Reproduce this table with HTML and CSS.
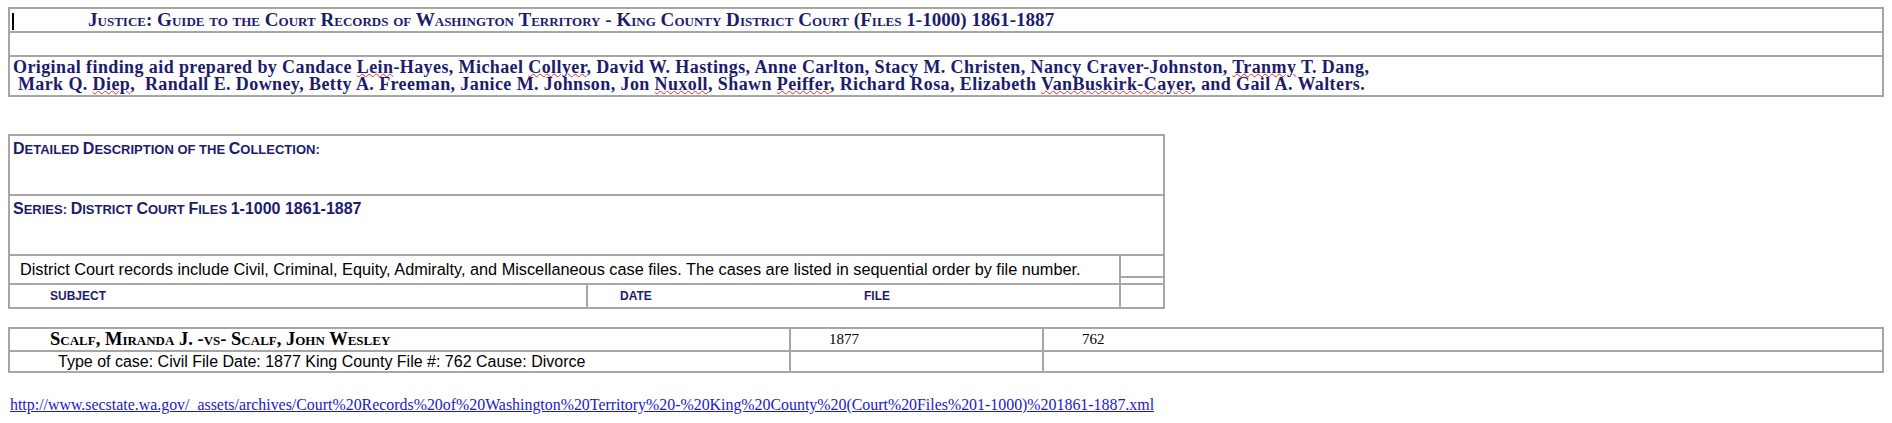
FILE: index.html
```html
<!DOCTYPE html>
<html lang="en">
<head>
  <meta charset="UTF-8">
  <title>Justice: Guide to the Court Records of Washington Territory</title>
  <link rel="stylesheet" href="styles.css">
</head>
<body>
  <!-- Guide header -->
  <table class="grid intro">
    <tr>
      <td class="title"><span class="caret"></span>Justice: Guide to the Court Records of Washington Territory - King County District Court (Files 1-1000) 1861-1887</td>
    </tr>
    <tr>
      <td class="blank"></td>
    </tr>
    <tr>
      <td class="credits">Original finding aid prepared by Candace <span class="typo">Lein</span>-Hayes, Michael <span class="typo">Collyer</span>, David W. Hastings, Anne Carlton, Stacy M. Christen, Nancy Craver-Johnston, <span class="typo">Tranmy</span> T. Dang,<br>&nbsp;Mark Q. <span class="typo">Diep</span>,&nbsp; Randall E. Downey, Betty A. Freeman, Janice M. Johnson, Jon <span class="typo">Nuxoll</span>, Shawn <span class="typo">Peiffer</span>, Richard Rosa, Elizabeth <span class="typo">VanBuskirk-Cayer</span>, and Gail A. Walters.</td>
    </tr>
  </table>

  <!-- Collection description -->
  <table class="grid collection">
    <tr>
      <td class="heading" colspan="3"><span class="init">D</span>etailed <span class="init">D</span>escription of the <span class="init">C</span>ollection:</td>
    </tr>
    <tr>
      <td class="heading" colspan="3"><span class="init">S</span>eries: <span class="init">D</span>istrict <span class="init">C</span>ourt <span class="init">F</span>iles <span class="init">1-1000 1861-1887</span></td>
    </tr>
    <tr>
      <td class="desc" colspan="2" rowspan="2">District Court records include Civil, Criminal, Equity, Admiralty, and Miscellaneous case files. The cases are listed in sequential order by file number.</td>
      <td class="side side-top"></td>
    </tr>
    <tr>
      <td class="side side-thin"></td>
    </tr>
    <tr>
      <td class="colhead subject">Subject</td>
      <td class="colhead dates"><span class="col-date">Date</span>File</td>
      <td class="side"></td>
    </tr>
  </table>

  <!-- Case listing -->
  <table class="grid cases">
    <tr>
      <td class="case-name">Scalf, Miranda J. -vs- Scalf, John Wesley</td>
      <td class="case-num case-date">1877</td>
      <td class="case-num">762</td>
    </tr>
    <tr>
      <td class="case-info">Type of case: Civil File Date: 1877 King County File #: 762 Cause: Divorce</td>
      <td></td>
      <td></td>
    </tr>
  </table>

  <p class="source"><a href="#">http://www.secstate.wa.gov/_assets/archives/Court%20Records%20of%20Washington%20Territory%20-%20King%20County%20(Court%20Files%201-1000)%201861-1887.xml</a></p>
</body>
</html>
```

FILE: styles.css
```css
/* General */
body {
  margin: 7px 8px;
  font-family: 'Liberation Serif', serif;
  color: #000;
  background: #fff;
}

/* Bordered tables */
.grid {
  border: 1px solid #a6a6a6;
  border-collapse: separate;
  border-spacing: 0;
}

.grid td {
  border: 1px solid #a6a6a6;
  padding: 0 3px;
  vertical-align: middle;
}

/* Header table */
.intro {
  width: 100%;
}

.title {
  height: 20px;
  padding-left: 2px !important;
  font-size: 19.1px;
  font-weight: bold;
  font-variant: small-caps;
  color: #1c1c6e;
  white-space: nowrap;
}

.caret {
  display: inline-block;
  width: 2px;
  height: 17px;
  margin-right: 74px;
  background: #000;
  vertical-align: middle;
}

.blank {
  height: 22px;
}

.credits {
  padding: 2px 3px 2px !important;
  font-size: 18px;
  line-height: 17px;
  letter-spacing: 0.4px;
  font-weight: bold;
  color: #1c1c6e;
}

.typo {
  text-decoration: underline wavy #e03030;
  text-decoration-thickness: 1px;
  text-underline-offset: 0;
}

/* Collection table */
.collection {
  width: 1157px;
  margin-top: 37px;
  font-family: 'Liberation Sans', sans-serif;
}

.heading {
  height: 54px;
  vertical-align: top !important;
  padding-top: 4px !important;
  font-size: 13px;
  font-weight: bold;
  text-transform: uppercase;
  color: #1c1c6e;
}

.init {
  font-size: 16px;
}

.desc {
  height: 27px;
  padding-left: 10px !important;
  font-size: 16.3px;
}

.side {
  width: 36px;
}

.side-top {
  height: 20px;
}

.side-thin {
  height: 5px;
}

.colhead {
  height: 22px;
  font-size: 12px;
  font-weight: bold;
  text-transform: uppercase;
  color: #1c1c6e;
}

.subject {
  width: 533px;
  padding-left: 40px !important;
}

.dates {
  padding-left: 32px !important;
}

.col-date {
  display: inline-block;
  width: 244px;
}

/* Case table */
.cases {
  width: 100%;
  margin-top: 18px;
}

.case-name {
  width: 736px;
  height: 21px;
  padding-left: 40px !important;
  font-size: 18.5px;
  font-weight: bold;
  font-variant: small-caps;
}

.case-num {
  height: 21px;
  padding-left: 38px !important;
  font-size: 15px;
}

.case-date {
  width: 210px;
}

.case-info {
  height: 19px;
  padding-left: 48px !important;
  font-family: 'Liberation Sans', sans-serif;
  font-size: 16px;
}

/* Source link */
.source {
  margin: 23px 0 0 2px;
  font-size: 15.9px;
}

.source a {
  color: #1a1acc;
}
```
